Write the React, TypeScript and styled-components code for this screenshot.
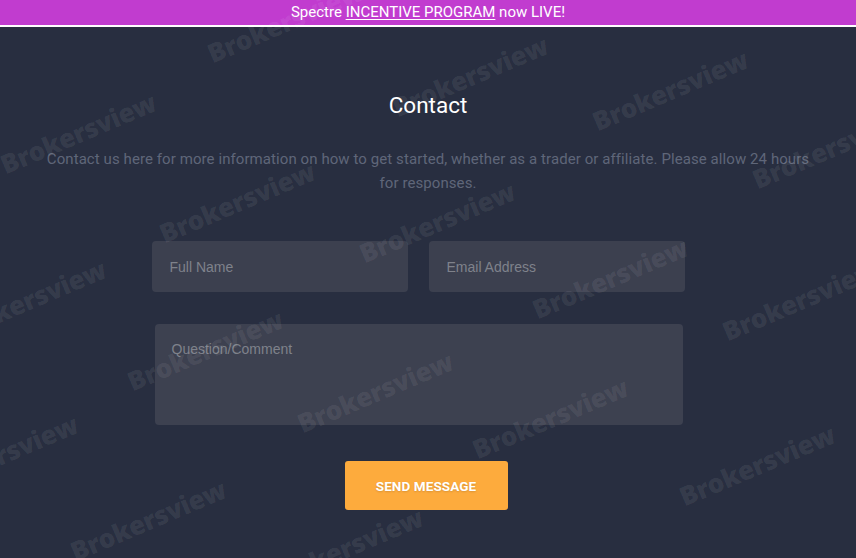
import React from "react";
import styled, { createGlobalStyle } from "styled-components";

const Global = createGlobalStyle`
  html, body { margin: 0; padding: 0; background: #282e40; }
  body { font-family: "Open Sans", "Noto Sans", sans-serif; overflow: hidden; }
  * { box-sizing: border-box; }
`;

const Page = styled.div`
  position: relative;
  width: 856px;
  height: 558px;
  overflow: hidden;
  background: #282e40;
`;

const Banner = styled.div`
  height: 27px;
  background: #c13ccf;
  border-bottom: 2px solid #ffffff;
  color: #ffffff;
  font-family: "Roboto", sans-serif;
  font-size: 15px;
  letter-spacing: 0;
  line-height: 25px;
  text-align: center;
`;

const BannerLink = styled.span`
  text-decoration: underline;
  text-underline-offset: 2px;
`;

const Main = styled.main`
  display: flex;
  flex-direction: column;
  align-items: center;
  padding-top: 63px;
`;

const Title = styled.h1`
  margin: 0;
  font-family: "Roboto", sans-serif;
  font-weight: 400;
  font-size: 22.5px;
  line-height: 30px;
  color: #ffffff;
`;

const Lead = styled.p`
  margin: 27px 0 0;
  font-family: "Roboto", sans-serif;
  font-size: 15px;
  letter-spacing: 0.08px;
  line-height: 24px;
  color: #5f6679;
  text-align: center;
`;

const Form = styled.form`
  width: 533px;
  margin: 46px 0 0 -20px;
  display: flex;
  flex-direction: column;
`;

const Row = styled.div`
  display: grid;
  grid-template-columns: 1fr 1fr;
  gap: 21px;
`;

const Field = styled.input`
  height: 51px;
  border: none;
  border-radius: 4px;
  background: #3c404f;
  padding: 0 18px;
  font-family: "Liberation Sans", Arial, sans-serif;
  font-size: 14px;
  color: #c0c2c8;
  outline: none;
  &::placeholder { color: #7f828b; }
`;

const Area = styled.textarea`
  height: 101px;
  margin: 32px 2px 0 3px;
  border: none;
  border-radius: 4px;
  background: #3d4150;
  padding: 17px 17px;
  font-family: "Liberation Sans", Arial, sans-serif;
  font-size: 14px;
  color: #c0c2c8;
  resize: none;
  outline: none;
  &::placeholder { color: #7f828b; }
`;

const Send = styled.button`
  align-self: center;
  width: 163px;
  height: 49px;
  margin: 36px 0 0 16px;
  border: none;
  border-radius: 3px;
  background: #fdab3d;
  color: #ffffff;
  font-family: "Roboto", sans-serif;
  font-weight: 700;
  font-size: 13.5px;
  letter-spacing: 0.1px;
  text-shadow: 0 1px 2px rgba(0, 0, 0, 0.15);
`;

const Mark = styled.div`
  position: absolute;
  transform: translate(-50%, -50%) rotate(-23deg);
  font-family: "Open Sans", sans-serif;
  font-weight: 800;
  font-size: 26px;
  letter-spacing: -0.3px;
  color: rgba(255, 255, 255, 0.08);
  white-space: nowrap;
  pointer-events: none;
  user-select: none;
`;

const marks: [number, number][] = [
  [285, 22],
  [470, 76],
  [670, 90],
  [830, 148],
  [78, 133],
  [237, 202],
  [437, 222],
  [610, 278],
  [800, 300],
  [28, 300],
  [205, 350],
  [375, 392],
  [550, 418],
  [757, 465],
  [0, 455],
  [148, 520],
  [345, 548],
];

export default function App() {
  return (
    <Page>
      <Global />
      <Banner>
        Spectre <BannerLink>INCENTIVE PROGRAM</BannerLink> now LIVE!
      </Banner>
      <Main>
        <Title>Contact</Title>
        <Lead>
          Contact us here for more information on how to get started, whether as a trader or affiliate. Please allow 24 hours
          <br />
          for responses.
        </Lead>
        <Form onSubmit={(e) => e.preventDefault()}>
          <Row>
            <Field placeholder="Full Name" />
            <Field placeholder="Email Address" />
          </Row>
          <Area placeholder="Question/Comment" />
          <Send type="submit">SEND MESSAGE</Send>
        </Form>
      </Main>
      {marks.map(([x, y], i) => (
        <Mark key={i} style={{ left: x, top: y }}>
          Brokersview
        </Mark>
      ))}
    </Page>
  );
}
